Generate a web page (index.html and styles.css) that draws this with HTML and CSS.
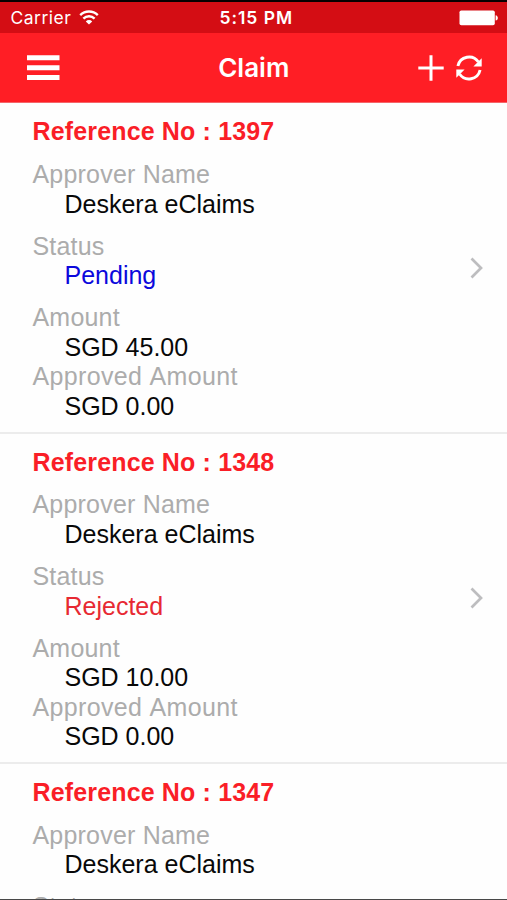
FILE: index.html
```html
<!DOCTYPE html>
<html lang="en">
<head>
<meta charset="utf-8">
<title>Claim</title>
<link rel="stylesheet" href="styles.css">
</head>
<body>
<div class="app">
  <div class="status-bar">
    <div class="carrier"><span>Carrier</span>
      <svg class="wifi" width="20" height="16" viewBox="0 0 20 16" fill="none" stroke="#fff" stroke-width="2.4"><path d="M1.2 5.1a12.6 12.6 0 0 1 17.6 0M4.4 8.6a8 8 0 0 1 11.2 0"/><path d="M6.8 11.4a4.6 4.6 0 0 1 6.4 0L10 14.6z" fill="#fff" stroke="none"/></svg>
    </div>
    <div class="time">5:15 PM</div>
    <svg class="battery" width="39" height="16" viewBox="0 0 39 16" fill="#fff"><rect x=".5" y=".5" width="35.3" height="14.8" rx="1.8"/><path d="M36.6 5.2c1.5.3 2.2 1.3 2.2 2.7s-.7 2.4-2.2 2.7z"/></svg>
  </div>
  <header class="nav-bar">
    <div class="nav-side">
      <svg width="33" height="26" viewBox="0 0 33 26" fill="#fff"><path d="M0 .3h32.5v5H0zM0 10.2h32.5v5H0zM0 20.1h32.5v5H0z"/></svg>
    </div>
    <h1 class="title">Claim</h1>
    <div class="nav-side actions">
      <svg width="26" height="26" viewBox="0 0 26 26" stroke="#fff" stroke-width="3"><path d="M.3 13h25.4M13 .3v25.4"/></svg>
      <svg width="28" height="28" viewBox="0 0 28 28" fill="none" stroke="#fff" stroke-width="2.9"><path d="M2.9 12A11.4 11.4 0 0 1 23.4 8M25.1 16A11.4 11.4 0 0 1 4.6 20"/><path d="M26.7 4.2v8.3h-8.3zM1.3 23.8v-8.3h8.3z" fill="#fff" stroke="none"/></svg>
    </div>
  </header>
  <main class="claims">
    <article class="claim">
      <div class="details">
        <h2 class="reference">Reference No : 1397</h2>
        <dl class="field"><dt>Approver Name</dt><dd>Deskera eClaims</dd></dl>
        <dl class="field"><dt>Status</dt><dd class="pending">Pending</dd></dl>
        <dl class="field"><dt>Amount</dt><dd>SGD 45.00</dd><dt class="wide">Approved Amount</dt><dd>SGD 0.00</dd></dl>
      </div>
      <svg class="chevron" width="14" height="22" viewBox="0 0 14 22"><path d="M1.5 1.5l9.5 9.5-9.5 9.5"/></svg>
    </article>
    <article class="claim">
      <div class="details">
        <h2 class="reference">Reference No : 1348</h2>
        <dl class="field"><dt>Approver Name</dt><dd>Deskera eClaims</dd></dl>
        <dl class="field"><dt>Status</dt><dd class="rejected">Rejected</dd></dl>
        <dl class="field"><dt>Amount</dt><dd>SGD 10.00</dd><dt class="wide">Approved Amount</dt><dd>SGD 0.00</dd></dl>
      </div>
      <svg class="chevron" width="14" height="22" viewBox="0 0 14 22"><path d="M1.5 1.5l9.5 9.5-9.5 9.5"/></svg>
    </article>
    <article class="claim">
      <div class="details">
        <h2 class="reference">Reference No : 1347</h2>
        <dl class="field"><dt>Approver Name</dt><dd>Deskera eClaims</dd></dl>
        <dl class="field"><dt>Status</dt></dl>
      </div>
    </article>
  </main>
</div>
</body>
</html>
```
FILE: styles.css
```css
* {
  box-sizing: border-box;
  margin: 0;
}

body {
  background: #fefefe;
  font-family: "Liberation Sans", Arial, sans-serif;
}

.app {
  display: flex;
  flex-direction: column;
  height: 900px;
  overflow: hidden;
  border-top: 2px solid #080000;
  border-bottom: 1px solid #484848;
}

.status-bar {
  display: grid;
  grid-template-columns: 1fr auto 1fr;
  align-items: center;
  flex: none;
  height: 31px;
  padding: 1px 9px 0 10.5px;
  background: #d40d14;
  color: #fff;
  font-family: Inter, sans-serif;
  font-size: 17.5px;
  line-height: 30px;
}

.carrier {
  display: flex;
  align-items: center;
  gap: 8px;
  letter-spacing: 0.5px;
}

.wifi {
  margin-bottom: 1px;
}

.time {
  padding-left: 4px;
  font-weight: 600;
  letter-spacing: 0.95px;
}

.battery {
  justify-self: end;
  margin-bottom: 1px;
}

.nav-bar {
  display: grid;
  grid-template-columns: 1fr auto 1fr;
  align-items: center;
  flex: none;
  height: 70px;
  padding: 0 24px 0 26.5px;
  border-bottom: 1px solid #f4656a;
  background: #ff1e25;
}

.nav-side {
  display: flex;
  align-items: center;
}

.actions {
  justify-content: flex-end;
  gap: 11px;
}

.title {
  padding-right: 2px;
  color: #fff;
  font: 600 26px/69px Inter, sans-serif;
}

.claims {
  flex: 1;
  min-height: 0;
  overflow: hidden;
}

.claim {
  display: flex;
  align-items: center;
  justify-content: space-between;
  height: 330.3px;
  padding: 0 23px 0 32.5px;
  border-bottom: 2px solid #ececec;
}

.claim:first-child {
  height: 331px;
}

.details {
  align-self: flex-start;
  padding-top: 13.6px;
  font-size: 25px;
  line-height: 29.5px;
  white-space: nowrap;
}

.claim:first-child .details {
  padding-top: 14.3px;
}

.reference {
  margin-bottom: 13.3px;
  color: #fa1e27;
  font-size: 25px;
  font-weight: 700;
  letter-spacing: 0.15px;
}

.field {
  margin-bottom: 12.7px;
}

.field dt {
  color: #acacac;
  font-kerning: none;
  letter-spacing: 0.2px;
}

.field .wide {
  letter-spacing: 0.34px;
}

.field dd {
  margin-left: 32px;
  color: #080808;
}

.field .pending {
  color: #0c08dc;
}

.field .rejected {
  color: #e72932;
}

.chevron {
  fill: none;
  stroke: #bdbdbf;
  stroke-width: 2.7;
}
```
